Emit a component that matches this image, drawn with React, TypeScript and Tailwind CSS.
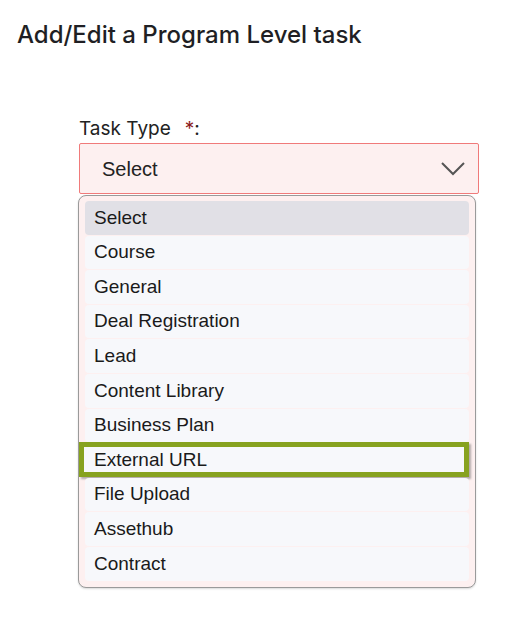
const options = [
  "Select",
  "Course",
  "General",
  "Deal Registration",
  "Lead",
  "Content Library",
  "Business Plan",
  "External URL",
  "File Upload",
  "Assethub",
  "Contract",
];

export default function App() {
  return (
    <div className="min-h-screen bg-white font-['Inter',sans-serif] text-[#1f1f24]">
      <div className="pl-[17px] pt-[19px]">
        <h1 className="text-[24px] font-medium leading-[32px]">
          Add/Edit a Program Level task
        </h1>
      </div>

      <div className="ml-[79px] mt-[65px] w-[400px]">
        <label className="block text-[19px] leading-[26px] text-[#222]">
          Task Type<span className="ml-[14px] text-[#8b1a1a]">*</span>:
        </label>

        <div className="mt-px flex h-[51px] items-center justify-between rounded-[2px] border border-[#f07a7a] bg-[#fdf0f0] pl-[22px] pr-[13px]">
          <span className="font-['Liberation_Sans',Arial,sans-serif] text-[20px] text-[#222]">
            Select
          </span>
          <svg width="24" height="14" viewBox="0 0 24 14" fill="none">
            <path d="M1 1 L12 12 L23 1" stroke="#555" strokeWidth="2" />
          </svg>
        </div>

        <div className="mt-px w-[398px] -ml-px rounded-[8px] border border-[#9a9a9a] bg-[#fdf0f0] px-[6px] pt-[5px] pb-[6px] shadow-[0_1px_2px_rgba(0,0,0,0.15)]">
          <ul className="flex flex-col gap-px font-['Liberation_Sans',Arial,sans-serif] text-[19px] text-[#1a1a1a]">
            {options.map((opt, i) => (
              <li
                key={opt}
                className={
                  i === 0
                    ? "flex h-[33.6px] items-center rounded-[4px] bg-[#e1e0e6] pl-[9px]"
                    : i === 7
                    ? "-my-[0.7px] -ml-[6px] flex h-[35px] items-center border-[5px] border-[#87a21f] bg-[#f7f8fb] pl-[10px] shadow-[2px_2px_2px_rgba(0,0,0,0.3)]"
                    : "flex h-[33.6px] items-center rounded-[4px] bg-[#f7f8fb] pl-[9px]"
                }
              >
                {opt}
              </li>
            ))}
          </ul>
        </div>
      </div>
    </div>
  );
}
